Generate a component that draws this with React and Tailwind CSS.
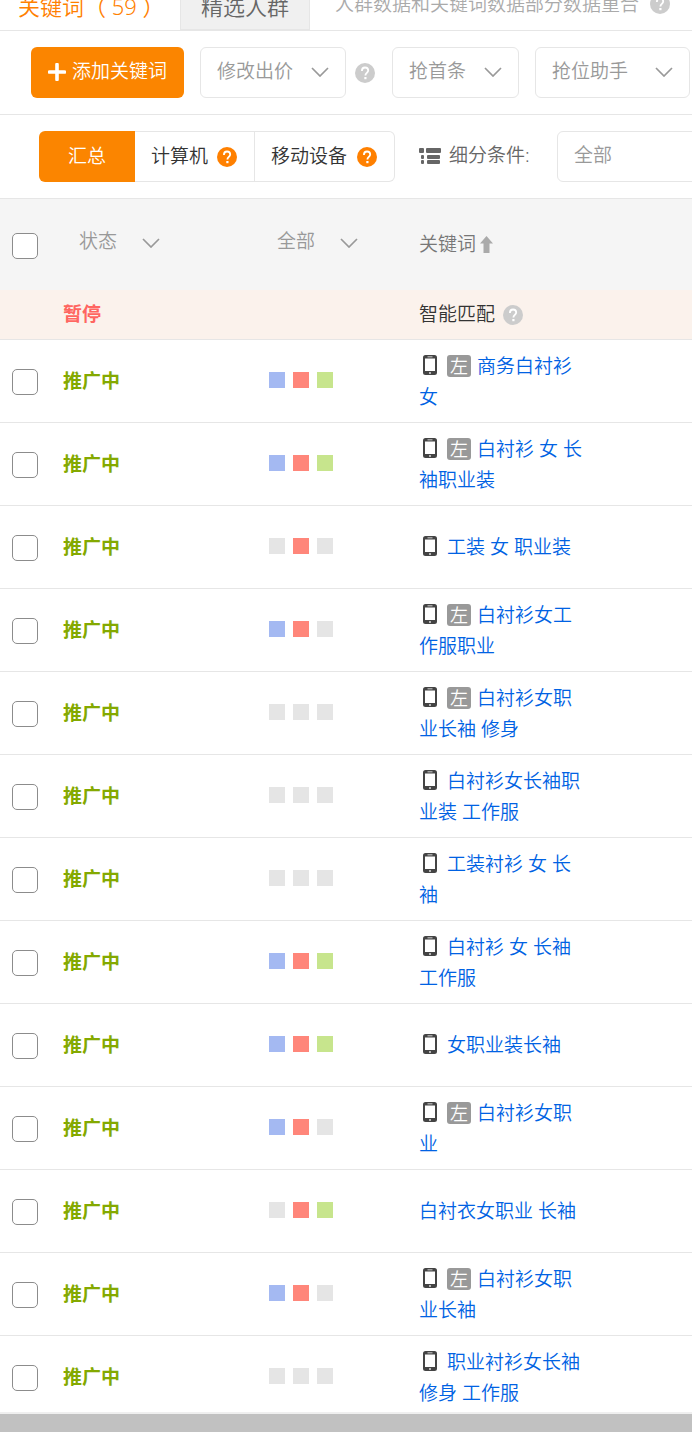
import { useState } from "react";
import clsx from "clsx";

const SQUARES = ["bg-[#a4b9f2]", "bg-[#ff867a]", "bg-[#c7e58d]"];

// levels: which of the three squares (blue, red, green) are lit
const KEYWORDS = [
    { id: 1, text: "商务白衬衫女", mobile: true, left: true, levels: [1, 1, 1] },
    { id: 2, text: "白衬衫 女 长袖职业装", mobile: true, left: true, levels: [1, 1, 1] },
    { id: 3, text: "工装 女 职业装", mobile: true, left: false, levels: [0, 1, 0] },
    { id: 4, text: "白衬衫女工作服职业", mobile: true, left: true, levels: [1, 1, 0] },
    { id: 5, text: "白衬衫女职业长袖 修身", mobile: true, left: true, levels: [0, 0, 0] },
    { id: 6, text: "白衬衫女长袖职业装 工作服", mobile: true, left: false, levels: [0, 0, 0] },
    { id: 7, text: "工装衬衫 女 长袖", mobile: true, left: false, levels: [0, 0, 0] },
    { id: 8, text: "白衬衫 女 长袖 工作服", mobile: true, left: false, levels: [1, 1, 1] },
    { id: 9, text: "女职业装长袖", mobile: true, left: false, levels: [1, 1, 1] },
    { id: 10, text: "白衬衫女职业", mobile: true, left: true, levels: [1, 1, 0] },
    { id: 11, text: "白衬衣女职业 长袖", mobile: false, left: false, levels: [0, 1, 1] },
    { id: 12, text: "白衬衫女职业长袖", mobile: true, left: true, levels: [1, 1, 0] },
    { id: 13, text: "职业衬衫女长袖修身 工作服", mobile: true, left: false, levels: [0, 0, 0] },
];

function Help({ className }) {
    return (
        <svg viewBox="0 0 20 20" className={clsx("size-5 shrink-0", className)} aria-hidden="true">
            <circle cx="10" cy="10" r="10" fill="currentColor" />
            <path
                d="M6.900 7.900C6.900 5.700 8.200 4.500 10 4.500s3.200 1.200 3.200 3c0 2.300-2.800 2.500-2.800 4.900"
                fill="none"
                stroke="#fff"
                strokeWidth="1.800"
            />
            <rect x="9.300" y="14" width="2.200" height="2.200" fill="#fff" />
        </svg>
    );
}

function Chevron({ className }) {
    return (
        <svg viewBox="0 0 18 10" className={clsx("h-[10px] w-[18px] shrink-0", className)} aria-hidden="true">
            <path d="M1 1l8 8 8-8" fill="none" stroke="#999" strokeWidth="1.700" />
        </svg>
    );
}

function MobileIcon() {
    return (
        <svg viewBox="0 0 14 20" className="mr-[10px] ml-1 inline-block h-5 w-[14px] align-[-2px]" aria-hidden="true">
            <path
                fill="#444"
                fillRule="evenodd"
                d="M2.500 0h9A2.500 2.500 0 0 1 14 2.500v15a2.500 2.500 0 0 1-2.500 2.500h-9A2.500 2.500 0 0 1 0 17.500v-15A2.500 2.500 0 0 1 2.500 0zM2 3.500v12.500h10V3.500zM4.500 1.500v.8h5v-.8zM6.200 17.200v1.600h1.600v-1.600z"
            />
        </svg>
    );
}

function ListIcon() {
    return (
        <svg viewBox="0 0 22 16" className="h-4 w-[22px] shrink-0" fill="#666" aria-hidden="true">
            <rect x="0" y="0" width="5" height="5" rx="1" />
            <rect x="7" y="0" width="15" height="5" rx="1" />
            <rect x="2" y="7" width="3" height="4" rx="1" />
            <rect x="8" y="7" width="13" height="4" rx="1" />
            <rect x="2" y="12" width="3" height="4" rx="1" />
            <rect x="8" y="12" width="13" height="4" rx="1" />
        </svg>
    );
}

function MenuButton({ children, className }) {
    return (
        <button
            className={clsx(
                "flex h-[51px] shrink-0 items-center justify-between rounded-md border border-[#e6e6e6] bg-white px-4 pb-[2px] text-[#999]",
                className
            )}
        >
            <span className="pb-px">{children}</span>
            <Chevron />
        </button>
    );
}

function HeadSelect({ label, options }) {
    return (
        <div className="relative w-[114px] pb-[6px]">
            <select aria-label={label} className="w-full appearance-none bg-transparent pl-4 text-[#999] outline-none">
                {options.map((o) => (
                    <option key={o}>{o}</option>
                ))}
            </select>
            <Chevron className="pointer-events-none absolute top-3 right-[17px]" />
        </div>
    );
}

function Checkbox({ label, checked, onChange }) {
    return (
        <input
            type="checkbox"
            aria-label={label}
            checked={checked}
            onChange={onChange}
            className="mt-[2px] block size-[26px] appearance-none rounded-[5px] border border-[#8c8c8c] bg-white checked:bg-[#fa8600]"
        />
    );
}

export default function App() {
    const [selected, setSelected] = useState([]);
    const [device, setDevice] = useState("all");

    const allSelected = selected.length === KEYWORDS.length;

    const toggle = (id) =>
        setSelected((prev) => (prev.includes(id) ? prev.filter((x) => x !== id) : [...prev, id]));

    return (
        <div className="flex h-screen flex-col overflow-hidden bg-white font-['Noto_Sans','Noto_Sans_CJK_SC',sans-serif] text-[19px] leading-[31px] font-[350] text-[#333]">
            {/* Tabs */}
            <nav className="flex h-[31px] shrink-0 items-end overflow-hidden border-b border-[#e6e6e6] whitespace-nowrap">
                <button className="h-12 w-[180px] shrink-0 pl-[18px] text-left text-[22px] text-[#ff8000]">
                    关键词（ 59 ）
                </button>
                <button className="h-12 w-[130px] shrink-0 border border-[#e6e6e6] bg-[#f0f0f0] text-[22px] text-[#666]">
                    精选人群
                </button>
                <p className="flex h-[52px] shrink-0 items-center pl-[25px] text-[#aaa]">
                    人群数据和关键词数据部分数据重合
                    <Help className="ml-[11px] text-[#ccc]" />
                </p>
            </nav>

            {/* Toolbar */}
            <div className="flex shrink-0 items-center overflow-hidden border-b border-[#e6e6e6] py-4 pl-[31px] whitespace-nowrap">
                <button className="flex h-[51px] w-[153px] shrink-0 items-center justify-center gap-[6px] rounded-md bg-[#fb8500] pb-[2px] text-white">
                    <svg viewBox="0 0 18 18" className="size-[18px]" aria-hidden="true">
                        <path d="M9 1.500v15M1.500 9h15" stroke="#fff" strokeWidth="3.600" strokeLinecap="round" />
                    </svg>
                    <span>添加关键词</span>
                </button>
                <MenuButton className="ml-4 w-[146px]">修改出价</MenuButton>
                <Help className="mr-[17px] ml-[9px] text-[#ccc]" />
                <MenuButton className="w-[127px]">抢首条</MenuButton>
                <MenuButton className="ml-4 w-[155px]">抢位助手</MenuButton>
            </div>

            {/* Device filter */}
            <div className="flex shrink-0 items-center overflow-hidden border-b border-[#e6e6e6] py-4 pl-[39px] whitespace-nowrap">
                <div className="flex h-[51px] shrink-0">
                    <button
                        onClick={() => setDevice("all")}
                        className={clsx(
                            "w-24 rounded-l-md",
                            device === "all" ? "bg-[#fb8500] text-white" : "border border-[#e6e6e6]"
                        )}
                    >
                        汇总
                    </button>
                    <button
                        onClick={() => setDevice("pc")}
                        className="flex w-[120px] items-center gap-[9px] border-y border-r border-[#e6e6e6] pl-4"
                    >
                        计算机
                        <Help className="text-[#ff8000]" />
                    </button>
                    <button
                        onClick={() => setDevice("mobile")}
                        className="flex w-[140px] items-center gap-[10px] rounded-r-md border-y border-r border-[#e6e6e6] pl-4"
                    >
                        移动设备
                        <Help className="text-[#ff8000]" />
                    </button>
                </div>
                <label htmlFor="segment" className="ml-6 flex w-[138px] shrink-0 items-center gap-2 pb-[2px] text-[#666]">
                    <ListIcon />
                    细分条件:
                </label>
                <select
                    id="segment"
                    className="h-[51px] w-[155px] shrink-0 appearance-none rounded-md border border-[#e6e6e6] bg-white px-4 pb-[2px] text-[#999]"
                >
                    <option>全部</option>
                </select>
            </div>

            {/* Keywords */}
            <div className="min-h-0 flex-1 overflow-hidden border-b-2 border-[#efefef]">
                <table className="w-full table-fixed border-separate border-spacing-0">
                    <colgroup>
                        <col className="w-[51px]" />
                        <col className="w-[206px]" />
                        <col className="w-[150px]" />
                        <col className="w-[192px]" />
                        <col />
                    </colgroup>
                    <thead>
                        <tr className="h-[91px] bg-[#f5f5f5] text-left">
                            <th className="pl-3">
                                <Checkbox
                                    label="全选"
                                    checked={allSelected}
                                    onChange={() => setSelected(allSelected ? [] : KEYWORDS.map((k) => k.id))}
                                />
                            </th>
                            <th className="pl-3 font-[350]">
                                <HeadSelect label="状态" options={["状态"]} />
                            </th>
                            <th className="pl-1 font-[350]">
                                <HeadSelect label="全部" options={["全部"]} />
                            </th>
                            <th className="px-3 font-[350] text-[#777]">
                                <span className="flex items-center gap-1">
                                    关键词
                                    <svg viewBox="0 0 13 17" className="h-[17px] w-[13px]" fill="#aaa" aria-hidden="true">
                                        <path d="M6.500 0L13 7.500H9.500V17h-6V7.500H0z" />
                                    </svg>
                                </span>
                            </th>
                            <th></th>
                        </tr>
                    </thead>
                    <tbody>
                        <tr className="h-[50px] bg-[#fbf2ec]">
                            <td className="border-b border-[#e6e6e6]"></td>
                            <td className="border-b border-[#e6e6e6] px-3 font-bold text-[#ff6661]">暂停</td>
                            <td className="border-b border-[#e6e6e6]"></td>
                            <td className="border-b border-[#e6e6e6] px-3">
                                <span className="flex items-center gap-2">
                                    智能匹配
                                    <Help className="text-[#ccc]" />
                                </span>
                            </td>
                            <td className="border-b border-[#e6e6e6]"></td>
                        </tr>
                        {KEYWORDS.map((k) => (
                            <tr key={k.id} className="h-[83px]">
                                <td className="border-b border-[#e6e6e6] pl-3">
                                    <Checkbox
                                        label={k.text}
                                        checked={selected.includes(k.id)}
                                        onChange={() => toggle(k.id)}
                                    />
                                </td>
                                <td className="border-b border-[#e6e6e6] px-3 font-bold text-[#84a900]">推广中</td>
                                <td className="border-b border-[#e6e6e6] px-3">
                                    <div className="flex gap-2 pb-[2px]">
                                        {SQUARES.map((color, i) => (
                                            <span
                                                key={color}
                                                className={clsx("size-4", k.levels[i] ? color : "bg-[#e5e5e5]")}
                                            />
                                        ))}
                                    </div>
                                </td>
                                <td className="border-b border-[#e6e6e6] px-3 pt-px">
                                    {k.mobile && <MobileIcon />}
                                    {k.left && (
                                        <span className="mr-[6px] inline-block h-[22px] w-6 rounded-[3px] bg-[#999] text-center align-baseline text-lg leading-[22px] text-white">
                                            左
                                        </span>
                                    )}
                                    <a href="#" className="text-[#0062e3]">
                                        {k.text}
                                    </a>
                                </td>
                                <td className="border-b border-[#e6e6e6]"></td>
                            </tr>
                        ))}
                    </tbody>
                </table>
            </div>

            {/* Horizontal scrollbar track */}
            <div className="h-[18px] shrink-0 bg-[#c1c1c1]" />
        </div>
    );
}
